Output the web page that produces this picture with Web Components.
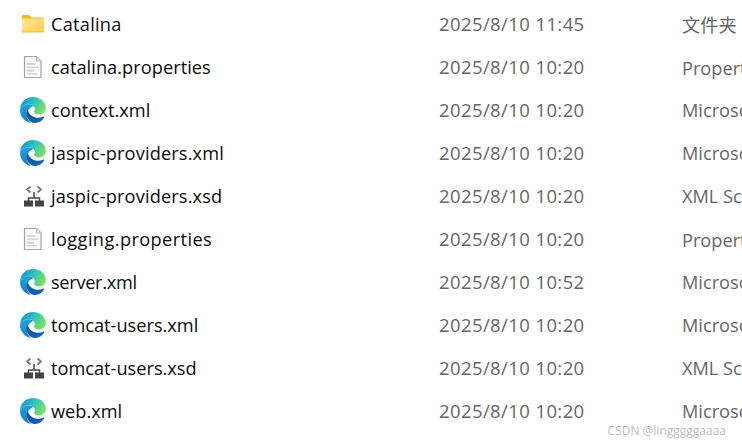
<!DOCTYPE html>
<html lang="zh">
<head>
<meta charset="utf-8">
<title>conf</title>
<style>
html, body { margin: 0; background: #fff; overflow: hidden; height: 100%; }
</style>
</head>
<body>
<file-list>
  <file-row icon="folder" name="Catalina" track=".25" date="2025/8/10 11:45" type="文件夹"></file-row>
  <file-row icon="doc" name="catalina.properties" track=".05" date="2025/8/10 10:20" type="Properties 文件"></file-row>
  <file-row icon="edge" name="context.xml" date="2025/8/10 10:20" type="Microsoft Edge HTML Document"></file-row>
  <file-row icon="edge" name="jaspic-providers.xml" track=".15" date="2025/8/10 10:20" type="Microsoft Edge HTML Document"></file-row>
  <file-row icon="xsd" name="jaspic-providers.xsd" track=".15" date="2025/8/10 10:20" type="XML Schema File"></file-row>
  <file-row icon="doc" name="logging.properties" track=".4" date="2025/8/10 10:20" type="Properties 文件"></file-row>
  <file-row icon="edge" name="server.xml" track="-.3" date="2025/8/10 10:52" type="Microsoft Edge HTML Document"></file-row>
  <file-row icon="edge" name="tomcat-users.xml" date="2025/8/10 10:20" type="Microsoft Edge HTML Document"></file-row>
  <file-row icon="xsd" name="tomcat-users.xsd" date="2025/8/10 10:20" type="XML Schema File"></file-row>
  <file-row icon="edge" name="web.xml" date="2025/8/10 10:20" type="Microsoft Edge HTML Document"></file-row>
</file-list>
<water-mark>CSDN @lingggggaaaa</water-mark>

<script>
// every icon sits in the same 26x26 box
const ICONS = {
  folder: `
    <svg viewBox="0 0 26 26" width="26" height="26">
      <defs><linearGradient id="f" x1="0" y1="0" x2="1" y2="1">
        <stop offset="0" stop-color="#ffe88f"/><stop offset="1" stop-color="#fdcf55"/>
      </linearGradient></defs>
      <path d="M2 5a1 1 0 0 1 1-1h6l2.500 2.500V9H2z" fill="#f7b500"/>
      <rect x="2" y="6.500" width="22" height="15" rx="1" fill="#f7bb2b"/>
      <rect x="2" y="7.500" width="22" height="13" fill="url(#f)"/>
    </svg>`,
  doc: `
    <svg viewBox="0 0 26 26" width="26" height="26">
      <path d="M4.500 2.500h12l4.500 4.500v16.500H4.500z" fill="#fafafa" stroke="#a3a3a3" stroke-width="1.200"/>
      <path d="M16.500 2.500V7H21z" fill="#e8e8e8" stroke="#bbb"/>
      <path d="M7 9h8v2H7zM7 12.500h11.500v1.500H7zM7 15.500h7v2H7zM7 19h10v1.500H7z" fill="#d4d4d4"/>
    </svg>`,
  edge: `
    <svg viewBox="0 0 24 24" width="26" height="26">
      <defs>
        <linearGradient id="e1" x1="0.2" y1="0" x2="0.5" y2="1">
          <stop offset="0" stop-color="#1fa3dc"/><stop offset="1" stop-color="#0f7fca"/>
        </linearGradient>
        <linearGradient id="e2" x1="0" y1="0.2" x2="1" y2="0.6">
          <stop offset="0" stop-color="#0f8fd8"/><stop offset="0.5" stop-color="#2fc3c0"/><stop offset="1" stop-color="#7fe35a"/>
        </linearGradient>
        <linearGradient id="e3" x1="0" y1="0" x2="1" y2="0.7">
          <stop offset="0" stop-color="#0a4f96"/><stop offset="1" stop-color="#1268b8"/>
        </linearGradient>
      </defs>
      <path d="M0 12C1.500 8.500 4.500 6.600 7.500 6.600c2 0 3.500.4 5.200 1.700C9 9 6.400 13 6.400 16.600c0 3.200 1.600 5.900 4.200 7.300C4.500 23.200 0 18 0 12z" fill="url(#e1)"/>
      <path d="M12 0c6 0 10 3.500 11.300 7 .9 2.500.7 5-.5 6.700-1.300 1.800-3.800 2.600-5.800 2.300-2-.3-3.800-1-4-2.500 0-1 .7-1.200 1-2 0-3-3-4.900-6.500-4.900C4.500 6.600 1.500 8.500 0 12 0 5 5.500 0 12 0z" fill="url(#e2)"/>
      <path d="M7.300 12.200c-.9 1.300-1.300 2.800-1 4.800.5 4 4.200 7 7.700 7 3.500 0 6.500-2 8.300-5 .3-.6-.3-1.300-1.100-.8-1.400.7-2.900 1-4.400 1-4.300 0-8.500-2.700-9.500-7z" fill="url(#e3)"/>
    </svg>`,
  xsd: `
    <svg viewBox="0 0 26 26" width="26" height="26" fill="none">
      <path d="M10.500 3.500 7 6.500l3.500 3M17.500 3.500l3.500 3-3.500 3" stroke="#777" stroke-width="1.700"/>
      <path d="M14 9v6M8.500 18v-3h11v3" stroke="#4a4a4a" stroke-width="1.500"/>
      <rect x="4" y="17.500" width="9" height="6" fill="#444"/>
      <rect x="15" y="17.500" width="9" height="6" fill="#444"/>
    </svg>`
};

class FileList extends HTMLElement {
  constructor() {
    super();
    this.attachShadow({mode: 'open'});
    this.shadowRoot.innerHTML = `
      <style>
        :host {
          display: flex;
          flex-direction: column;
          padding-top: 2px;
          font-family: "Open Sans", "Noto Sans CJK SC", sans-serif;
          font-size: 18.200px;
        }
      </style>
      <slot></slot>
    `;
  }
}

class FileRow extends HTMLElement {
  constructor() {
    super();
    this.attachShadow({mode: 'open'});
    const get = n => this.getAttribute(n) || '';
    this.shadowRoot.innerHTML = `
      <style>
        :host {
          display: grid;
          grid-template-columns: 26px 393px 243px 1fr;
          align-items: center;
          height: 43px;
          padding-left: 20px;
          white-space: nowrap;
        }
        .icon { display: flex; width: 26px; height: 26px; }
        .name { color: #0c0c0c; padding-left: 5px; letter-spacing: ${get('track') || 0}px; }
        .date { color: #666; font-size: 18.500px; letter-spacing: .4px; }
        .type { color: #666; overflow: hidden; }
      </style>
      <span class="icon">${ICONS[get('icon')]}</span>
      <span class="name">${get('name')}</span>
      <span class="date">${get('date')}</span>
      <span class="type">${get('type')}</span>
    `;
  }
}

class WaterMark extends HTMLElement {
  constructor() {
    super();
    this.attachShadow({mode: 'open'});
    this.shadowRoot.innerHTML = `
      <style>
        :host {
          position: absolute;
          right: 16px;
          bottom: 4px;
          font-family: "Open Sans", sans-serif;
          font-size: 12px;
          color: #bdbdbd;
        }
      </style>
      <slot></slot>
    `;
  }
}

customElements.define('file-list', FileList);
customElements.define('file-row', FileRow);
customElements.define('water-mark', WaterMark);
</script>
</body>
</html>
